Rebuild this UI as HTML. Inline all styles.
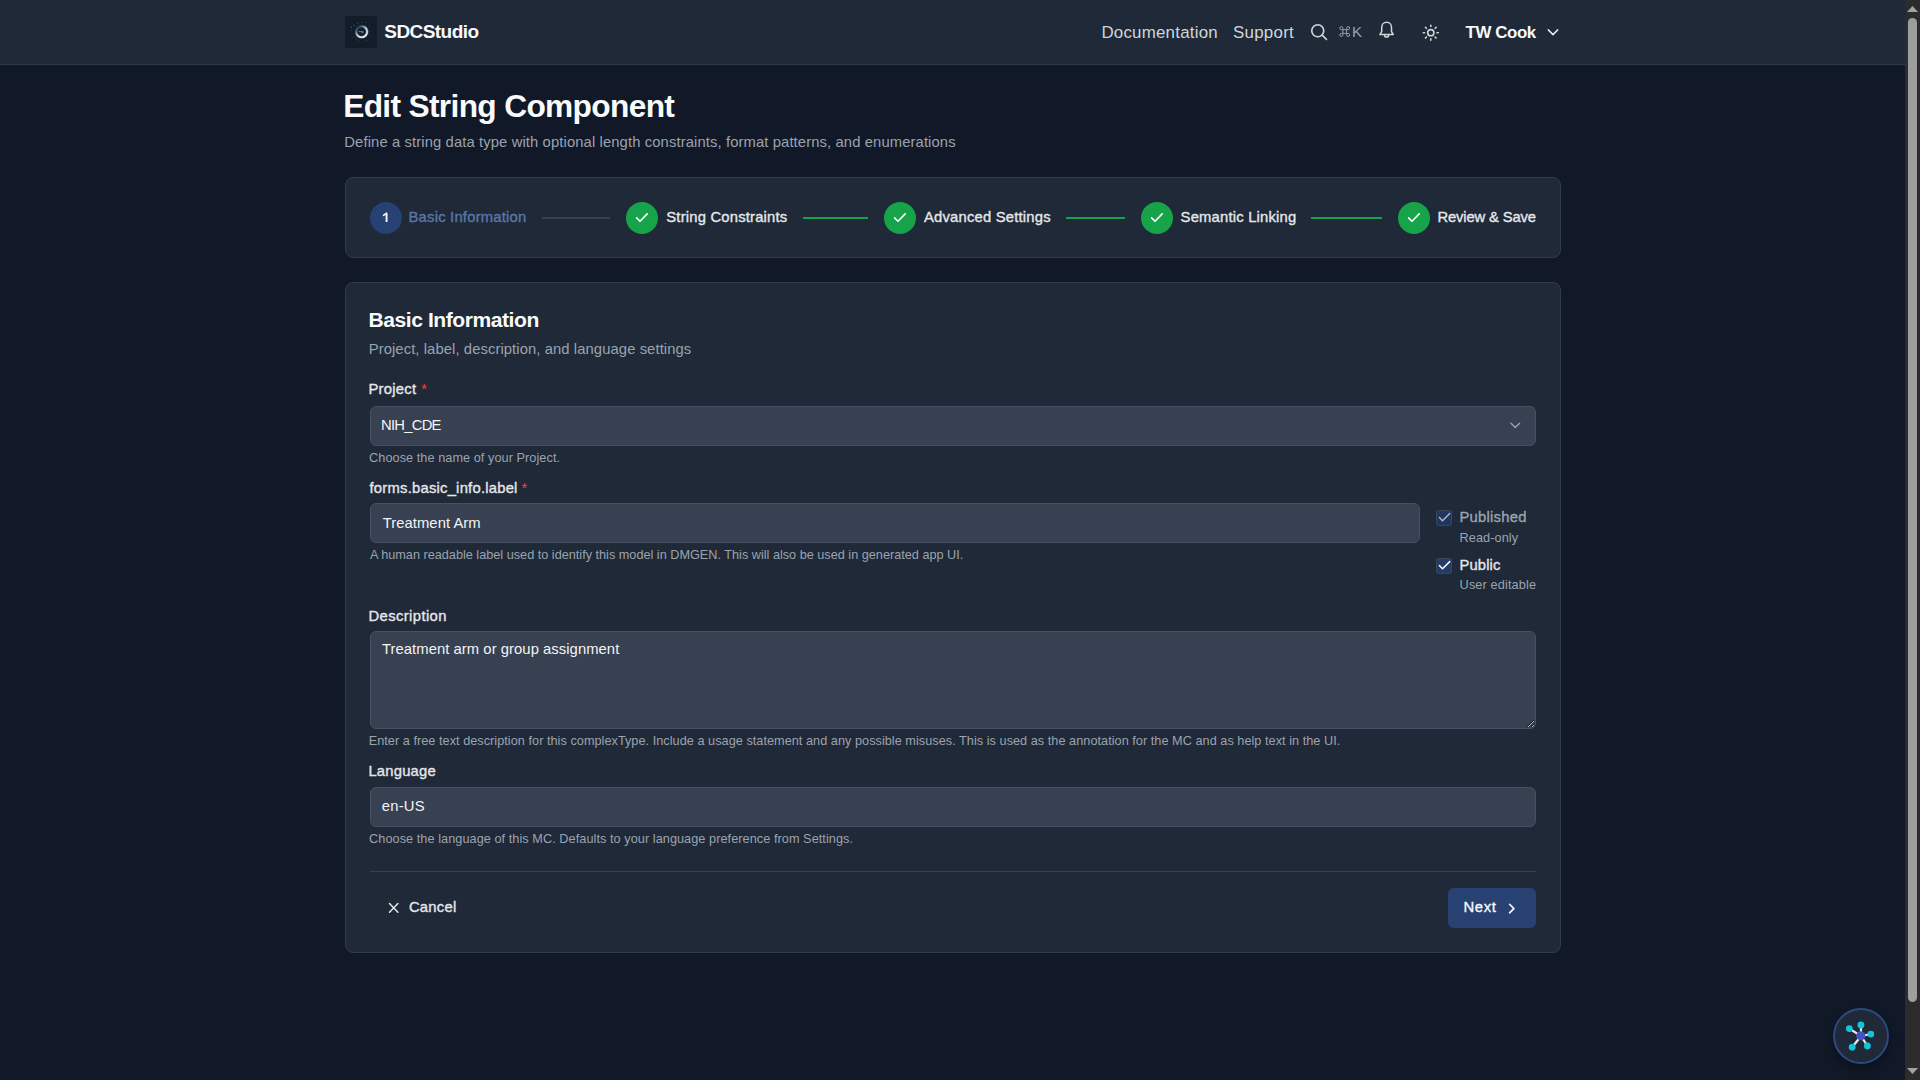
<!DOCTYPE html>
<html><head><meta charset="utf-8"><title>Edit String Component</title>
<style>
*{box-sizing:border-box;margin:0;padding:0}
html,body{width:1920px;height:1080px;overflow:hidden;background:#111827;font-family:"Liberation Sans",sans-serif}
.t{position:absolute;white-space:nowrap}
#hdr{position:absolute;left:0;top:0;width:1905px;height:65px;background:#1f2937;border-bottom:1px solid #2f3a49}
#logo{position:absolute;left:345px;top:16px;width:32px;height:32px;background:#121d2a}
.card{position:absolute;left:345px;width:1216px;background:#1f2937;border:1px solid #303b4c;border-radius:8px}
.circ{position:absolute;top:201.6px;width:32px;height:32px;border-radius:50%;display:flex;align-items:center;justify-content:center}
.green{background:#16a34a}
.ln{position:absolute;top:216.5px;height:2px}
.inp{position:absolute;background:#374151;border:1px solid #455062;border-radius:6px}
.cb{position:absolute;left:1436px;width:16px;height:16px;border-radius:2.5px;background:#243b6a;border:1px solid #3c4759}
#sb{position:absolute;left:1905px;top:0;width:15px;height:1080px;background:#2c2c2c}
#thumb{position:absolute;left:1908px;top:18px;width:9px;height:984px;background:#9e9e9e;border-radius:5px}
</style></head><body>
<div id="hdr"></div>
<div id="logo"><svg width="32" height="32" viewBox="0 0 32 32">
<defs><linearGradient id="rg" x1="0.15" y1="0.1" x2="0.85" y2="0.9"><stop offset="0" stop-color="#2f5a86" stop-opacity="0.5"/><stop offset="0.45" stop-color="#b9c4d2"/><stop offset="1" stop-color="#e9edf3"/></linearGradient>
<filter id="gl" x="-50%" y="-50%" width="200%" height="200%"><feGaussianBlur stdDeviation="0.6"/></filter></defs>
<circle cx="16.6" cy="15.7" r="5.6" fill="none" stroke="url(#rg)" stroke-width="2.6" filter="url(#gl)" opacity="0.55"/>
<circle cx="16.6" cy="15.7" r="5.5" fill="none" stroke="url(#rg)" stroke-width="1.6"/>
<g fill="#8c98a8" opacity="0.75">
<circle cx="6.5" cy="11.5" r="0.5"/><circle cx="9" cy="9.2" r="0.5"/><circle cx="12.5" cy="7.5" r="0.45"/><circle cx="17" cy="6.3" r="0.45"/><circle cx="21" cy="6.6" r="0.35"/>
<circle cx="5.8" cy="14.5" r="0.4"/><circle cx="6.2" cy="17.5" r="0.35"/><circle cx="8.3" cy="21.3" r="0.45"/><circle cx="11" cy="23.2" r="0.45"/><circle cx="14" cy="24.8" r="0.35"/>
<circle cx="18" cy="25.3" r="0.35"/><circle cx="21.5" cy="24.5" r="0.4"/><circle cx="24.5" cy="19.5" r="0.35"/><circle cx="25.5" cy="15.8" r="0.35"/><circle cx="24.5" cy="10" r="0.3"/>
</g>
<path d="M13.6 15.6h4.8M16.5 16.6h2" stroke="#c9d0da" stroke-width="0.55"/>
</svg></div>

<div class="card" style="top:177px;height:81px"></div>
<div class="circ" style="left:370px;background:#264172"></div>
<svg style="position:absolute;left:378px;top:208px" width="16" height="18" viewBox="378 208 16 18"><path d="M383.5 215.4L386.3 213.4" stroke="#f9fafb" stroke-width="1.6" stroke-linecap="round"/><path d="M386.55 212.8V222" stroke="#f9fafb" stroke-width="1.9"/></svg>
<div class="circ green" style="left:626px"> <svg width="16" height="16" viewBox="0 0 16 16" fill="none" stroke="#fff" stroke-width="1.6" stroke-linecap="round" stroke-linejoin="round"><path d="M2.6 7.9l3.4 3.4 7.2-7.4"/></svg> </div><div class="circ green" style="left:884px"> <svg width="16" height="16" viewBox="0 0 16 16" fill="none" stroke="#fff" stroke-width="1.6" stroke-linecap="round" stroke-linejoin="round"><path d="M2.6 7.9l3.4 3.4 7.2-7.4"/></svg> </div><div class="circ green" style="left:1141px"> <svg width="16" height="16" viewBox="0 0 16 16" fill="none" stroke="#fff" stroke-width="1.6" stroke-linecap="round" stroke-linejoin="round"><path d="M2.6 7.9l3.4 3.4 7.2-7.4"/></svg> </div><div class="circ green" style="left:1398px"> <svg width="16" height="16" viewBox="0 0 16 16" fill="none" stroke="#fff" stroke-width="1.6" stroke-linecap="round" stroke-linejoin="round"><path d="M2.6 7.9l3.4 3.4 7.2-7.4"/></svg> </div>
<div class="ln" style="left:542px;width:68.3px;background:#374151"></div><div class="ln" style="left:803px;width:65.0px;background:#16a34a"></div><div class="ln" style="left:1066px;width:59.0px;background:#16a34a"></div><div class="ln" style="left:1310.8px;width:71.7px;background:#16a34a"></div>

<div class="card" style="top:282px;height:671px"></div>
<div class="inp" style="left:370px;top:405.5px;width:1166px;height:40px"></div>
<div class="inp" style="left:370px;top:503px;width:1050px;height:40px"></div>
<textarea class="inp" style="left:370px;top:631px;width:1166px;height:98px;resize:vertical;outline:none;color:transparent"></textarea>
<div class="inp" style="left:370px;top:787px;width:1166px;height:40px"></div>
<div class="cb" style="top:509.5px;background:#21365f"><svg style="position:absolute;left:-1px;top:-1px" width="16" height="16" viewBox="0 0 16 16" fill="none" stroke="#b3bac5" stroke-width="1.4" stroke-linecap="round" stroke-linejoin="round"><path d="M3.4 7.6l3.1 3.2 7.2-7.2"/></svg></div>
<div class="cb" style="top:557.5px"><svg style="position:absolute;left:-1px;top:-1px" width="16" height="16" viewBox="0 0 16 16" fill="none" stroke="#f9fafb" stroke-width="1.5" stroke-linecap="round" stroke-linejoin="round"><path d="M3.4 7.6l3.1 3.2 7.2-7.2"/></svg></div>
<div style="position:absolute;left:370px;top:871px;width:1166px;height:1px;background:#374151"></div>
<div style="position:absolute;left:1448px;top:888px;width:88px;height:40px;border-radius:6px;background:#264172"></div>

<div class="t" style="left:384.3px;top:20.00px;font-size:19px;line-height:24px;font-weight:bold;letter-spacing:-0.565px;color:#f9fafb;">SDCStudio</div><div class="t" style="left:1101.4px;top:22.00px;font-size:16.9px;line-height:22px;font-weight:normal;letter-spacing:0.223px;color:#d1d5db;">Documentation</div><div class="t" style="left:1233.0px;top:22.00px;font-size:16.9px;line-height:22px;font-weight:normal;letter-spacing:0.272px;color:#d1d5db;">Support</div><div class="t" style="left:1465.6px;top:22.00px;font-size:16.9px;line-height:22px;font-weight:bold;letter-spacing:-0.434px;color:#f9fafb;">TW Cook</div><div class="t" style="left:343.2px;top:86.00px;font-size:31.7px;line-height:40px;font-weight:bold;letter-spacing:-0.665px;color:#f9fafb;">Edit String Component</div><div class="t" style="left:344.3px;top:133.00px;font-size:14.8px;line-height:19px;font-weight:normal;letter-spacing:0.109px;color:#9ca3af;">Define a string data type with optional length constraints, format patterns, and enumerations</div><div class="t" style="left:408.5px;top:208.00px;font-size:14.8px;line-height:19px;font-weight:normal;-webkit-text-stroke:0.35px currentColor;letter-spacing:0.216px;color:#5a77a8;">Basic Information</div><div class="t" style="left:666.3px;top:208.00px;font-size:14.8px;line-height:19px;font-weight:normal;-webkit-text-stroke:0.35px currentColor;letter-spacing:0.194px;color:#e5e7eb;">String Constraints</div><div class="t" style="left:924.0px;top:208.00px;font-size:14.8px;line-height:19px;font-weight:normal;-webkit-text-stroke:0.35px currentColor;letter-spacing:0.198px;color:#e5e7eb;">Advanced Settings</div><div class="t" style="left:1180.6px;top:208.00px;font-size:14.8px;line-height:19px;font-weight:normal;-webkit-text-stroke:0.35px currentColor;letter-spacing:0.196px;color:#e5e7eb;">Semantic Linking</div><div class="t" style="left:1437.5px;top:208.00px;font-size:14.8px;line-height:19px;font-weight:normal;-webkit-text-stroke:0.35px currentColor;letter-spacing:-0.155px;color:#e5e7eb;">Review &amp; Save</div><div class="t" style="left:368.5px;top:306.00px;font-size:21.1px;line-height:27px;font-weight:bold;letter-spacing:-0.458px;color:#f9fafb;">Basic Information</div><div class="t" style="left:368.7px;top:340.00px;font-size:14.8px;line-height:19px;font-weight:normal;letter-spacing:0.086px;color:#9ca3af;">Project, label, description, and language settings</div><div class="t" style="left:368.4px;top:380.00px;font-size:14.8px;line-height:19px;font-weight:normal;-webkit-text-stroke:0.35px currentColor;letter-spacing:0.278px;color:#e5e7eb;">Project</div><div class="t" style="left:421.3px;top:380.00px;font-size:14.5px;line-height:19px;font-weight:normal;letter-spacing:0.000px;color:#ef4444;">*</div><div class="t" style="left:381.1px;top:416.00px;font-size:14.8px;line-height:19px;font-weight:normal;letter-spacing:-0.767px;color:#f3f4f6;">NIH_CDE</div><div class="t" style="left:369.1px;top:450.00px;font-size:12.7px;line-height:16px;font-weight:normal;letter-spacing:0.061px;color:#9ca3af;">Choose the name of your Project.</div><div class="t" style="left:369.5px;top:479.00px;font-size:14.8px;line-height:19px;font-weight:normal;-webkit-text-stroke:0.35px currentColor;letter-spacing:0.228px;color:#e5e7eb;">forms.basic_info.label</div><div class="t" style="left:521.4px;top:479.00px;font-size:14.5px;line-height:19px;font-weight:normal;letter-spacing:0.000px;color:#ef4444;">*</div><div class="t" style="left:382.7px;top:514.00px;font-size:14.8px;line-height:19px;font-weight:normal;letter-spacing:0.058px;color:#f3f4f6;">Treatment Arm</div><div class="t" style="left:369.9px;top:547.00px;font-size:12.7px;line-height:16px;font-weight:normal;letter-spacing:-0.002px;color:#9ca3af;">A human readable label used to identify this model in DMGEN. This will also be used in generated app UI.</div><div class="t" style="left:1459.4px;top:508.00px;font-size:14.8px;line-height:19px;font-weight:normal;-webkit-text-stroke:0.35px currentColor;letter-spacing:0.260px;color:#9ca3af;">Published</div><div class="t" style="left:1459.6px;top:530.00px;font-size:12.7px;line-height:16px;font-weight:normal;letter-spacing:0.079px;color:#9ca3af;">Read-only</div><div class="t" style="left:1459.4px;top:556.00px;font-size:14.8px;line-height:19px;font-weight:normal;-webkit-text-stroke:0.35px currentColor;letter-spacing:0.141px;color:#e5e7eb;">Public</div><div class="t" style="left:1459.6px;top:577.00px;font-size:12.7px;line-height:16px;font-weight:normal;letter-spacing:0.132px;color:#9ca3af;">User editable</div><div class="t" style="left:368.5px;top:607.00px;font-size:14.8px;line-height:19px;font-weight:normal;-webkit-text-stroke:0.35px currentColor;letter-spacing:0.396px;color:#e5e7eb;">Description</div><div class="t" style="left:382.0px;top:640.00px;font-size:14.8px;line-height:19px;font-weight:normal;letter-spacing:0.055px;color:#f3f4f6;">Treatment arm or group assignment</div><div class="t" style="left:368.7px;top:733.00px;font-size:12.7px;line-height:16px;font-weight:normal;letter-spacing:0.037px;color:#9ca3af;">Enter a free text description for this complexType. Include a usage statement and any possible misuses. This is used as the annotation for the MC and as help text in the UI.</div><div class="t" style="left:368.4px;top:762.00px;font-size:14.8px;line-height:19px;font-weight:normal;-webkit-text-stroke:0.35px currentColor;letter-spacing:0.205px;color:#e5e7eb;">Language</div><div class="t" style="left:381.8px;top:797.00px;font-size:14.8px;line-height:19px;font-weight:normal;letter-spacing:0.217px;color:#f3f4f6;">en-US</div><div class="t" style="left:369.1px;top:831.00px;font-size:12.7px;line-height:16px;font-weight:normal;letter-spacing:0.061px;color:#9ca3af;">Choose the language of this MC. Defaults to your language preference from Settings.</div><div class="t" style="left:408.9px;top:898.00px;font-size:14.8px;line-height:19px;font-weight:normal;-webkit-text-stroke:0.35px currentColor;letter-spacing:0.276px;color:#e5e7eb;">Cancel</div><div class="t" style="left:1463.5px;top:898.00px;font-size:14.8px;line-height:19px;font-weight:normal;-webkit-text-stroke:0.35px currentColor;letter-spacing:0.633px;color:#f9fafb;">Next</div>

<!-- header icons -->
<svg style="position:absolute;left:1309px;top:22px" width="20" height="20" viewBox="0 0 24 24" fill="none" stroke="#d1d5db" stroke-width="2" stroke-linecap="round"><circle cx="10.5" cy="10.5" r="7.2"/><path d="M15.8 15.8L21 21"/></svg>
<svg style="position:absolute;left:1338.8px;top:26.3px" width="11.7" height="10.8" viewBox="0 0 13 12" fill="none" stroke="#9ca3af" stroke-width="1.05"><path d="M4.3 4.1h4.2v4.1H4.3z M4.3 4.1V2.6a1.7 1.7 0 1 0-1.7 1.5h1.7 M8.5 4.1V2.6a1.7 1.7 0 1 1 1.7 1.5H8.5 M4.3 8.2v1.5a1.7 1.7 0 1 1-1.7-1.5h1.7 M8.5 8.2v1.5a1.7 1.7 0 1 0 1.7-1.5H8.5"/></svg>
<div class="t" style="left:1352px;top:22px;font-size:15px;line-height:19px;color:#9ca3af">K</div>
<svg style="position:absolute;left:1377px;top:18.5px" width="20" height="22" viewBox="0 0 20 22" fill="none" stroke="#d1d5db" stroke-width="1.5" stroke-linejoin="round" stroke-linecap="round"><path d="M9.6 3.3C6.7 3.3 4.7 5.6 4.7 8.5v4.2L2.9 15.6h13.4l-1.8-2.9V8.5c0-2.9-2-5.2-4.9-5.2z"/><path d="M7.5 15.9a2.1 2.1 0 0 0 4.2 0"/></svg>
<svg style="position:absolute;left:1421px;top:22.5px" width="20" height="20" viewBox="0 0 20 20" fill="none" stroke="#d1d5db" stroke-width="1.6" stroke-linecap="round"><circle cx="9.8" cy="9.7" r="3.1"/><path d="M9.8 2.2v1.3M9.8 15.9v1.3M2.3 9.7h1.3M16 9.7h1.3M4.5 4.4l.9.9M14.2 14.1l.9.9M4.5 15l.9-.9M14.2 5.3l.9-.9"/></svg>
<svg style="position:absolute;left:1546px;top:27px" width="14" height="10" viewBox="0 0 14 10" fill="none" stroke="#e5e7eb" stroke-width="1.5" stroke-linecap="round" stroke-linejoin="round"><path d="M2.3 2.9l4.7 4.7 4.7-4.7"/></svg>
<!-- select chevron -->
<svg style="position:absolute;left:1508px;top:420px" width="14" height="10" viewBox="0 0 14 10" fill="none" stroke="#9ca3af" stroke-width="1.4" stroke-linecap="round" stroke-linejoin="round"><path d="M3 3.3l4.3 4.3 4.3-4.3"/></svg>
<!-- cancel x -->
<svg style="position:absolute;left:385px;top:900px" width="16" height="16" viewBox="0 0 16 16" fill="none" stroke="#e5e7eb" stroke-width="1.5" stroke-linecap="round"><path d="M4.5 3.6l8.4 8.6M12.9 3.6L4.5 12.2"/></svg>
<!-- next chevron -->
<svg style="position:absolute;left:1504px;top:900px" width="16" height="16" viewBox="0 0 16 16" fill="none" stroke="#f9fafb" stroke-width="1.6" stroke-linecap="round" stroke-linejoin="round"><path d="M5.6 4.3l4.3 4.3-4.3 4.3"/></svg>
<!-- FAB -->
<div style="position:absolute;left:1833px;top:1008px;width:56px;height:56px;border-radius:50%;background:#1f2937;border:2px solid #2a4a82;box-shadow:0 4px 10px rgba(0,0,0,.35)"></div>
<svg style="position:absolute;left:1841px;top:1016px" width="40" height="40" viewBox="1841 1016 40 40">
<g stroke="#e5e7eb" stroke-width="2.2"><path d="M1861 1036L1861 1025M1861 1036L1849.3 1028.6M1861 1036L1870.8 1034.1M1861 1036L1852.2 1047.2M1861 1036L1867.4 1045.9"/></g>
<g fill="#12c6da"><circle cx="1860.9" cy="1025" r="3.4"/><circle cx="1849.3" cy="1028.6" r="3.4"/><circle cx="1870.8" cy="1034.1" r="3.4"/><circle cx="1852.2" cy="1047.2" r="3.4"/><circle cx="1867.4" cy="1045.9" r="3.4"/></g>
<circle cx="1860.8" cy="1035.8" r="4.6" fill="#4553c2"/>
</svg>
<div id="sb"></div><div id="thumb"></div>
<svg style="position:absolute;left:1905px;top:0" width="15" height="1080" viewBox="0 0 15 1080"><path d="M2 12L7.5 6L13 12Z" fill="#a3a3a3"/><path d="M2 1068L7.5 1074L13 1068Z" fill="#a3a3a3"/></svg>
</body></html>
